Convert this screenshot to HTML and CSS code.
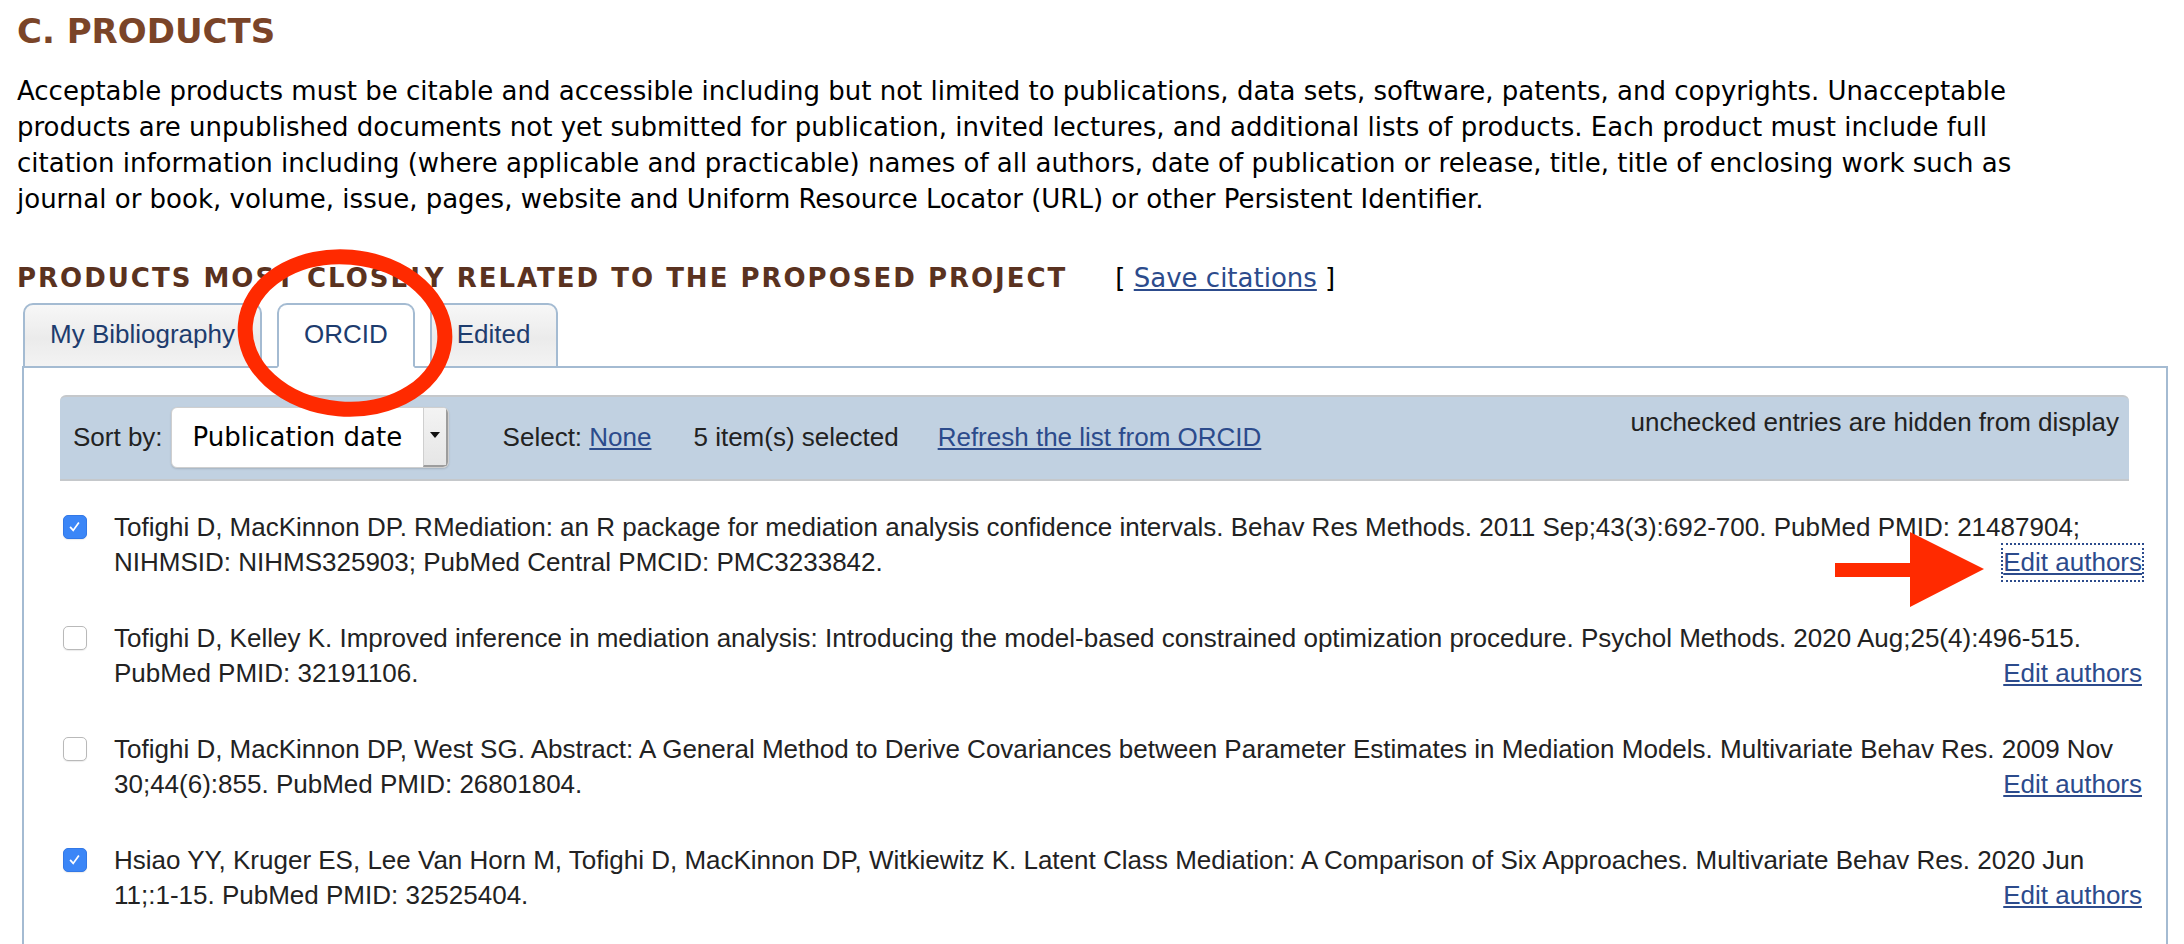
FILE: index.html
```html
<!DOCTYPE html>
<html lang="en">
<head>
    <meta charset="UTF-8">
    <title>Products</title>
    <link rel="stylesheet" href="styles.css">
</head>
<body>

    <div class="page">
        <h2 class="section-title">C. PRODUCTS</h2>
        <p class="intro">Acceptable products must be citable and accessible including but not limited to publications, data sets, software, patents, and copyrights. Unacceptable products are unpublished documents not yet submitted for publication, invited lectures, and additional lists of products. Each product must include full citation information including (where applicable and practicable) names of all authors, date of publication or release, title, title of enclosing work such as journal or book, volume, issue, pages, website and Uniform Resource Locator (URL) or other Persistent Identifier.</p>

        <div class="subhead">
            <h3>PRODUCTS MOST CLOSELY RELATED TO THE PROPOSED PROJECT</h3>
            <span class="save">[ <a href="#">Save citations</a> ]</span>
        </div>

        <div class="tabs-box">
            <ul class="tabs">
                <li class="tab">My Bibliography</li>
                <li class="tab active">ORCID</li>
                <li class="tab">Edited</li>
            </ul>

            <div class="panel">
                <div class="toolbar">
                    <span class="hint">unchecked entries are hidden from display</span>
                    <span class="label">Sort by:</span>
                    <div class="select">
                        <span class="select-text">Publication date</span>
                        <span class="select-arrow"></span>
                    </div>
                    <span class="select-none">Select: <a href="#">None</a></span>
                    <span class="count">5 item(s) selected</span>
                    <a href="#" class="refresh">Refresh the list from ORCID</a>
                </div>

                <ul class="items">
                    <li class="item">
                        <span class="check checked">
                            <svg viewBox="0 0 24 24"><path d="M7 12.5l3.5 4L17 7.5" /></svg>
                        </span>
                        <div class="citation">Tofighi D, MacKinnon DP. RMediation: an R package for mediation analysis confidence intervals. Behav Res Methods. 2011 Sep;43(3):692-700. PubMed PMID: 21487904; NIHMSID: NIHMS325903; PubMed Central PMCID: PMC3233842. <a href="#" class="edit focused">Edit authors</a></div>
                    </li>
                    <li class="item">
                        <span class="check"></span>
                        <div class="citation">Tofighi D, Kelley K. Improved inference in mediation analysis: Introducing the model-based constrained optimization procedure. Psychol Methods. 2020 Aug;25(4):496-515. PubMed PMID: 32191106. <a href="#" class="edit">Edit authors</a></div>
                    </li>
                    <li class="item">
                        <span class="check"></span>
                        <div class="citation">Tofighi D, MacKinnon DP, West SG. Abstract: A General Method to Derive Covariances between Parameter Estimates in Mediation Models. Multivariate Behav Res. 2009 Nov 30;44(6):855. PubMed PMID: 26801804. <a href="#" class="edit">Edit authors</a></div>
                    </li>
                    <li class="item">
                        <span class="check checked">
                            <svg viewBox="0 0 24 24"><path d="M7 12.5l3.5 4L17 7.5" /></svg>
                        </span>
                        <div class="citation">Hsiao YY, Kruger ES, Lee Van Horn M, Tofighi D, MacKinnon DP, Witkiewitz K. Latent Class Mediation: A Comparison of Six Approaches. Multivariate Behav Res. 2020 Jun 11;:1-15. PubMed PMID: 32525404. <a href="#" class="edit">Edit authors</a></div>
                    </li>
                </ul>
            </div>
        </div>
    </div>

    <!-- red markup drawn over the screenshot -->
    <svg class="markup" width="2184" height="944" viewBox="0 0 2184 944">
        <ellipse cx="345" cy="333" rx="100" ry="76" transform="rotate(5 345 333)" />
        <polygon points="1835,563 1910,563 1910,532 1984,569 1910,607 1910,577 1835,577" />
    </svg>

</body>
</html>
```

FILE: styles.css
```css
/* Reset */
* {
    margin: 0;
    padding: 0;
    box-sizing: border-box;
}

body {
    font-family: "Liberation Sans", Arial, sans-serif;
    color: #222;
    background: #fff;
}

a {
    color: #2c4b8c;
}

.page {
    position: relative;
    width: 2168px;
    padding: 11px 0 0 17px;
}

/* Headings */
.section-title {
    font-family: "DejaVu Sans", Verdana, sans-serif;
    font-size: 34px;
    line-height: 40px;
    color: #7a4428;
}

.intro {
    max-width: 2045px;
    margin-top: 22px;
    font-family: "DejaVu Sans", Verdana, sans-serif;
    font-size: 26px;
    line-height: 36px;
    color: #000;
}

.subhead {
    display: flex;
    align-items: baseline;
    margin-top: 45px;
    line-height: 32px;
}

.subhead h3 {
    font-family: "DejaVu Sans", Verdana, sans-serif;
    font-size: 26px;
    letter-spacing: 2px;
    color: #5a3220;
}

.save {
    margin-left: 48px;
    font-family: "DejaVu Sans", Verdana, sans-serif;
    font-size: 26px;
    color: #000;
}

/* Tabs */
.tabs-box {
    margin: 9px 0 0 5px;
}

.tabs {
    display: flex;
    list-style: none;
    margin-left: 1px;
    margin-bottom: -2px;
    position: relative;
}

.tab {
    font-size: 26px;
    line-height: 35px;
    color: #1d3c6e;
    padding: 12px 25px 14px;
    margin-right: 15px;
    border: 2px solid #a4bbd2;
    border-radius: 10px 10px 0 0;
    background: linear-gradient(#f7f7f7, #ebebeb 55%, #f3f3f3);
}

.tab.active {
    background: #fff;
    border-bottom-color: #fff;
}

.panel {
    border: 2px solid #a4bbd2;
    padding: 27px 24px 30px 36px;
}

/* Toolbar */
.toolbar {
    display: flex;
    align-items: center;
    margin-right: 13px;
    padding: 10px 10px 11px 13px;
    background: #c1d1e1;
    border-top: 2px solid #c5c8cb;
    border-bottom: 2px solid #c5c8cb;
    border-radius: 6px 6px 0 0;
    font-size: 26px;
    color: #222;
}

.hint {
    order: 9;
    margin-left: auto;
    align-self: flex-start;
}

.select {
    display: flex;
    width: 278px;
    height: 61px;
    margin-left: 8px;
    background: #fff;
    border: 1px solid #cfcfcf;
    border-radius: 6px;
    box-shadow: 0 1px 2px rgba(0, 0, 0, 0.15);
    overflow: hidden;
}

.select-text {
    flex: 1;
    padding-left: 21px;
    font-family: "DejaVu Sans", Verdana, sans-serif;
    font-size: 26px;
    line-height: 59px;
    color: #000;
}

.select-arrow {
    position: relative;
    width: 25px;
    background: linear-gradient(#f3f3f3, #e6e6e6);
    border-left: 1px solid #cfcfcf;
    border-right: 2px solid #9d9d9d;
    border-bottom: 2px solid #9d9d9d;
}

.select-arrow::after {
    content: "";
    position: absolute;
    left: 6px;
    top: 24px;
    border-left: 5px solid transparent;
    border-right: 5px solid transparent;
    border-top: 6px solid #111;
}

.select-none {
    margin-left: 54px;
}

.count {
    margin-left: 42px;
}

.refresh {
    margin-left: 39px;
}

/* Items */
.items {
    list-style: none;
    padding-top: 29px;
}

.item {
    display: flex;
    margin-bottom: 41px;
}

.check {
    flex: none;
    width: 24px;
    height: 24px;
    margin: 5px 27px 0 3px;
    border: 1.5px solid #b9b9b9;
    border-radius: 5px;
    background: #fff;
    box-shadow: 0 1px 1px rgba(0, 0, 0, 0.08);
}

.check.checked {
    background: #3b86f7;
    border-color: #3378e6;
}

.check svg {
    display: block;
    width: 21px;
    height: 21px;
    fill: none;
    stroke: #fff;
    stroke-width: 2;
}

.citation {
    flex: 1;
    font-size: 26px;
    line-height: 35px;
    color: #222;
}

.edit {
    float: right;
}

.edit.focused {
    outline: 2px dotted #2c4b8c;
}

/* Red markup */
.markup {
    position: absolute;
    left: 0;
    top: 0;
    pointer-events: none;
}

.markup ellipse {
    fill: none;
    stroke: #ff2a00;
    stroke-width: 15;
}

.markup polygon {
    fill: #ff2a00;
}
```
